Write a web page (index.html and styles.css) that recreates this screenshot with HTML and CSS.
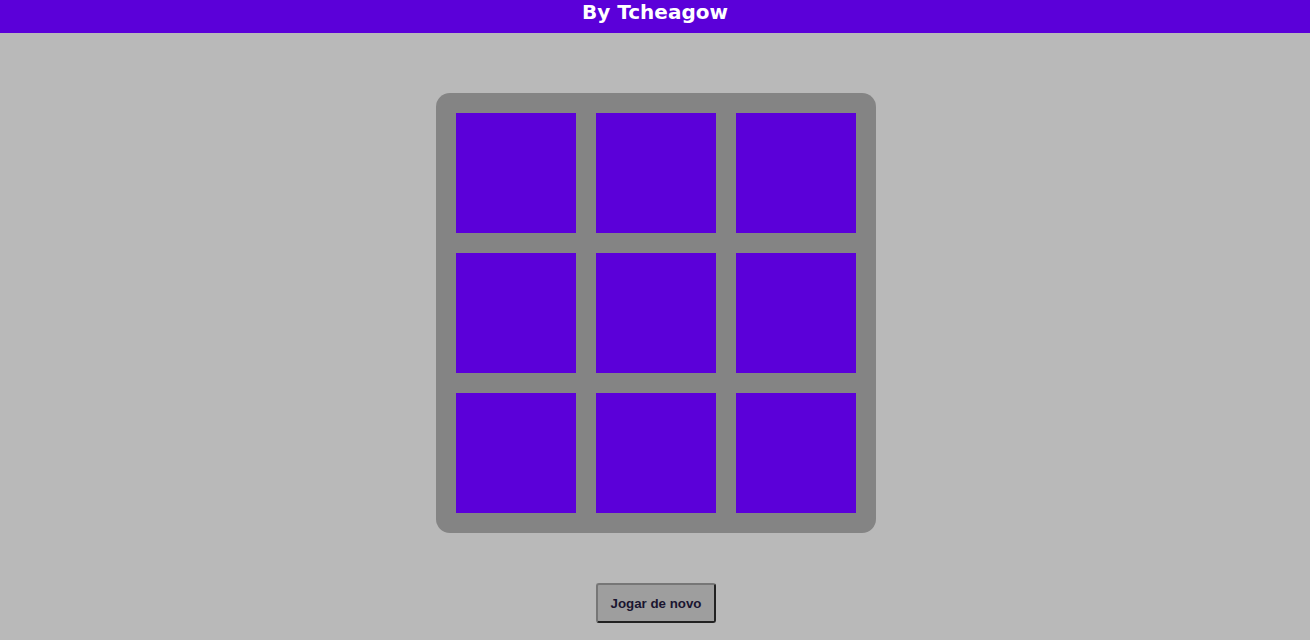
FILE: index.html
```html
<!DOCTYPE html>
<html>
<head>
<meta charset="utf-8">
<link rel="stylesheet" href="styles.css">
</head>
<body>
<header class="top">By Tcheagow</header>
<main class="main">
  <div class="board">
    <div class="cell"></div><div class="cell"></div><div class="cell"></div>
    <div class="cell"></div><div class="cell"></div><div class="cell"></div>
    <div class="cell"></div><div class="cell"></div><div class="cell"></div>
  </div>
  <button class="again">Jogar de novo</button>
</main>
</body>
</html>
```
FILE: styles.css
```css
html, body { margin: 0; padding: 0; }
body { background: #b9b9b9; font-family: "DejaVu Sans", Verdana, sans-serif; height: 640px; overflow: hidden; }
.top {
  height: 33px;
  background: #5b00d9;
  color: #fff;
  font-weight: bold;
  font-size: 20px;
  line-height: 24px;
  text-align: center;
}
.main { display: flex; flex-direction: column; align-items: center; padding-top: 60px; padding-left: 2px; }
.board {
  width: 440px; height: 440px;
  box-sizing: border-box;
  padding: 20px;
  background: #848484;
  border-radius: 14px;
  display: grid;
  grid-template-columns: repeat(3, 120px);
  grid-template-rows: repeat(3, 120px);
  gap: 20px;
}
.cell { background: #5b00d9; }
.again {
  margin-top: 50px;
  width: 120px; height: 40px;
  background: #9e9e9e;
  border: 2px solid;
  border-color: #767676 #222 #222 #767676;
  border-radius: 3px;
  font-family: "Liberation Sans", Arial, sans-serif;
  font-weight: bold;
  font-size: 13.3px;
  color: #1a1530;
  padding: 0;
}
```
